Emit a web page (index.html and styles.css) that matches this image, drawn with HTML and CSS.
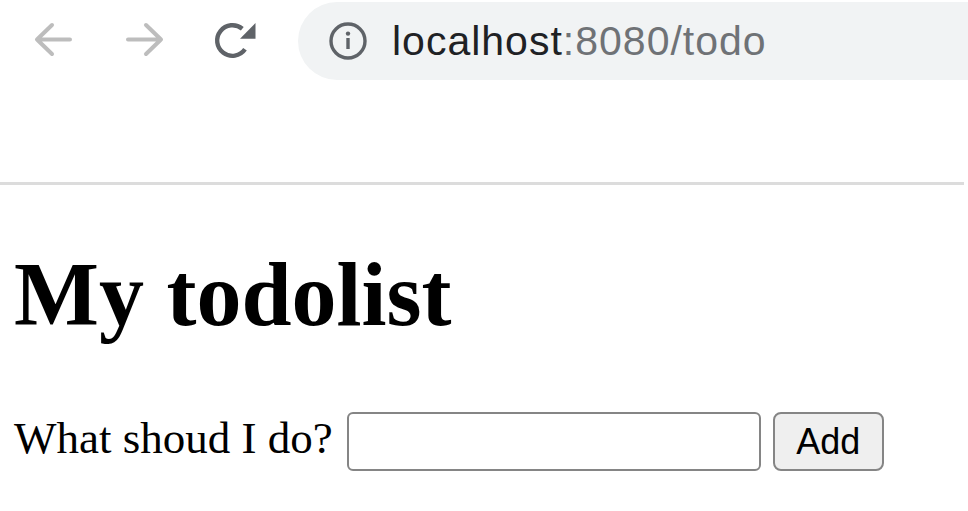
FILE: index.html
```html
<!DOCTYPE html>
<html lang="en">
<head>
<meta charset="utf-8">
<title>todo</title>
<link rel="stylesheet" href="styles.css">
</head>
<body>
<header class="toolbar">
  <svg class="nav-icon back" width="40" height="40" viewBox="0 0 40 40" aria-hidden="true">
    <path d="M37 18.5H4M19 4L4 18.5L19 33" fill="none" stroke="#bdbdbd" stroke-width="4" stroke-linecap="round" stroke-linejoin="round"/>
  </svg>
  <svg class="nav-icon forward" width="40" height="40" viewBox="0 0 40 40" aria-hidden="true">
    <path d="M4 18.5H37M22 4L37 18.5L22 33" fill="none" stroke="#bdbdbd" stroke-width="4" stroke-linecap="round" stroke-linejoin="round"/>
  </svg>
  <svg class="nav-icon reload" width="42" height="42" viewBox="0 0 42 42" aria-hidden="true">
    <path d="M28.3 8.8A15.3 15.3 0 1 0 31 29.3" fill="none" stroke="#5f6368" stroke-width="4.4"/>
    <path d="M26 18.8L41.5 18.8L41.5 3Z" fill="#5f6368"/>
  </svg>
  <div class="omnibox">
    <svg class="info-icon" width="40" height="40" viewBox="0 0 40 40" aria-hidden="true">
      <circle cx="20" cy="20" r="17" fill="none" stroke="#5f6368" stroke-width="3.4"/>
      <circle cx="20" cy="12.6" r="2.2" fill="#5f6368"/>
      <rect x="18.3" y="17" width="3.4" height="11" fill="#5f6368"/>
    </svg>
    <span class="url"><span class="host">localhost</span><span class="path">:8080/todo</span></span>
  </div>
</header>
<div class="divider"></div>
<main class="page">
  <h1 class="title">My todolist</h1>
  <form class="add-row">
    <label class="prompt" for="task">What shoud I do?</label>
    <input class="task-input" id="task" type="text">
    <button class="add-btn" type="button">Add</button>
  </form>
</main>
</body>
</html>
```

FILE: styles.css
```css
html, body {
  margin: 0;
  padding: 0;
  background: #ffffff;
}
body {
  width: 968px;
  height: 511px;
  overflow: hidden;
}
.toolbar {
  display: flex;
  align-items: center;
  height: 82px;
  padding-left: 33px;
  box-sizing: border-box;
}
.nav-icon {
  display: block;
  flex: none;
}
.forward {
  margin-left: 51px;
}
.reload {
  margin-left: 50px;
}
.omnibox {
  flex: 1;
  display: flex;
  align-items: center;
  height: 78px;
  margin-left: 42px;
  padding-left: 30px;
  background: #f1f3f4;
  border-radius: 39px 0 0 39px;
}
.info-icon {
  display: block;
  flex: none;
}
.url {
  margin-left: 24px;
  font-family: "Liberation Sans", Arial, sans-serif;
  font-size: 41px;
  line-height: 46px;
  letter-spacing: 1px;
  white-space: nowrap;
}
.host {
  color: #202124;
}
.path {
  color: #6f7276;
}
.divider {
  width: 964px;
  height: 3px;
  margin-top: 100px;
  background: #dcdcdc;
}
.page {
  padding-left: 14px;
}
.title {
  margin: 58px 0 0 0;
  font-family: "Liberation Serif", "Times New Roman", serif;
  font-weight: bold;
  font-size: 90px;
  line-height: 104px;
  color: #000;
}
.add-row {
  display: flex;
  align-items: flex-start;
  margin-top: 65px;
}
.prompt {
  font-family: "Liberation Serif", "Times New Roman", serif;
  font-size: 45px;
  line-height: 52px;
  color: #000;
}
.task-input {
  box-sizing: border-box;
  width: 414px;
  height: 59px;
  margin: 0 0 0 14px;
  padding: 0 6px;
  border: 2.5px solid #858585;
  border-radius: 6px;
  background: #fff;
  font-family: "Liberation Sans", Arial, sans-serif;
  font-size: 36px;
  outline: none;
}
.add-btn {
  box-sizing: border-box;
  width: 111px;
  height: 59px;
  margin: 0 0 0 12px;
  padding: 0;
  border: 2.5px solid #858585;
  border-radius: 8px;
  background: #efefef;
  color: #000;
  font-family: "Liberation Sans", Arial, sans-serif;
  font-size: 36px;
}
```
